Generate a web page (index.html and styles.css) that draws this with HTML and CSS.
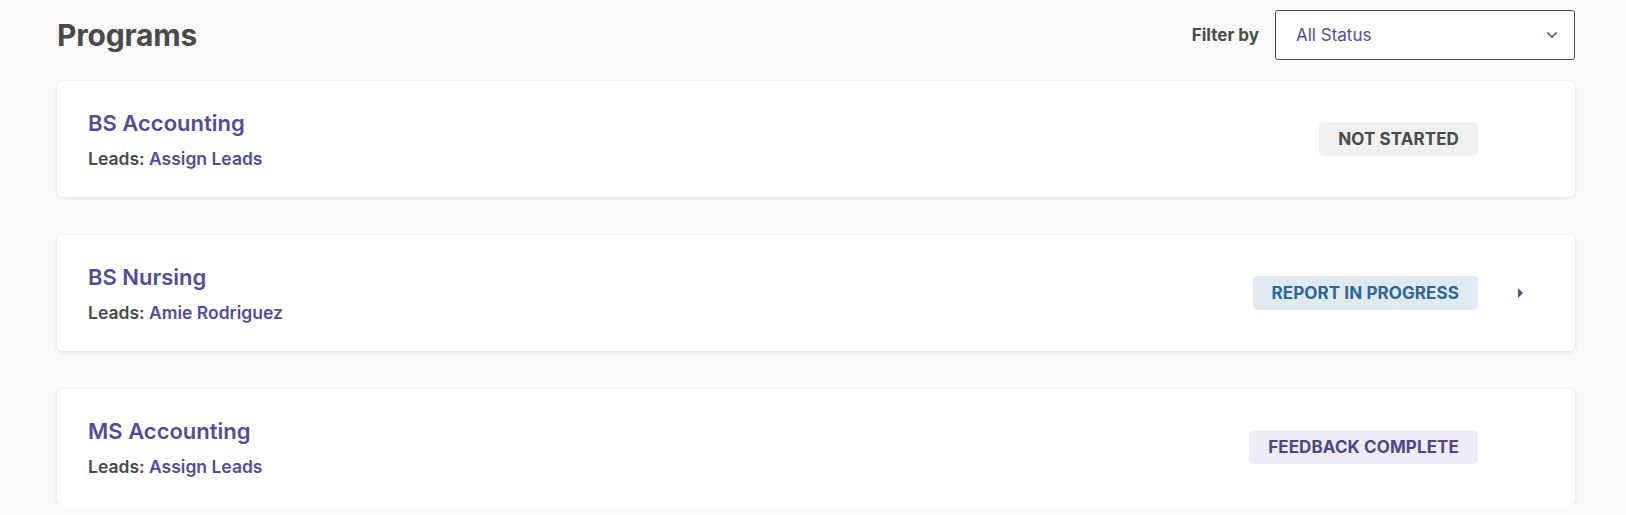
FILE: index.html
```html
<!DOCTYPE html>
<html lang="en">
<head>
    <meta charset="UTF-8">
    <title>Programs</title>
    <link rel="stylesheet" href="styles.css">
</head>
<body>

<main class="programs">

    <header class="programs-header">
        <h1 class="programs-title">Programs</h1>
        <label class="filter">
            <span class="filter-label">Filter by</span>
            <span class="filter-select">
                <span class="filter-value">All Status</span>
                <svg class="filter-chevron" width="12" height="8" viewBox="0 0 12 8">
                    <path d="M1.5 1.5 L6 6 L10.5 1.5" fill="none" stroke="#544c96" stroke-width="1.6"/>
                </svg>
            </span>
        </label>
    </header>

    <section class="program-list">

        <article class="program-card">
            <div class="program-info">
                <h2 class="program-name">BS Accounting</h2>
                <p class="program-leads">Leads: <a href="#">Assign Leads</a></p>
            </div>
            <div class="program-status">
                <span class="badge badge-not-started">Not Started</span>
                <span class="caret-slot"></span>
            </div>
        </article>

        <article class="program-card">
            <div class="program-info">
                <h2 class="program-name">BS Nursing</h2>
                <p class="program-leads">Leads: <a href="#">Amie Rodriguez</a></p>
            </div>
            <div class="program-status">
                <span class="badge badge-in-progress">Report in Progress</span>
                <span class="caret-slot"><span class="caret"></span></span>
            </div>
        </article>

        <article class="program-card">
            <div class="program-info">
                <h2 class="program-name">MS Accounting</h2>
                <p class="program-leads">Leads: <a href="#">Assign Leads</a></p>
            </div>
            <div class="program-status">
                <span class="badge badge-complete">Feedback Complete</span>
                <span class="caret-slot"></span>
            </div>
        </article>

    </section>

</main>

</body>
</html>
```

FILE: styles.css
```css
body {
    margin: 0;
    background: #f9f9f9;
    font-family: Inter, "Noto Sans", sans-serif;
    color: #4a4a4a;
}

.programs {
    padding: 10px 51px 0 57px;
}

/* header row */
.programs-header {
    display: flex;
    align-items: center;
    justify-content: space-between;
    margin-bottom: 21px;
}
.programs-title {
    margin: 0;
    font-size: 30px;
    font-weight: 700;
    letter-spacing: -.2px;
}

.filter {
    display: flex;
    align-items: center;
    gap: 16px;
}
.filter-label {
    font-size: 17px;
    font-weight: 700;
}
.filter-select {
    box-sizing: border-box;
    width: 300px;
    height: 50px;
    padding: 0 16px 0 20px;
    display: flex;
    align-items: center;
    justify-content: space-between;
    background: #fff;
    border: 1px solid #4a4a4a;
    border-radius: 3px;
}
.filter-value {
    font-size: 17px;
    color: #544c96;
}

/* cards */
.program-list {
    display: flex;
    flex-direction: column;
    gap: 38px;
}
.program-card {
    box-sizing: border-box;
    height: 116px;
    padding: 0 32px 0 31px;
    display: flex;
    align-items: center;
    justify-content: space-between;
    background: #fff;
    border-radius: 6px;
    box-shadow: 0 1px 4px rgba(0, 0, 0, .12);
}
.program-name {
    margin: 0 0 12px;
    font-size: 22px;
    font-weight: 600;
    color: #544c96;
}
.program-leads {
    margin: 0;
    font-size: 17.5px;
    font-weight: 600;
}
.program-leads a {
    color: #544c96;
    text-decoration: none;
}

.program-status {
    display: flex;
    align-items: center;
}
.badge {
    padding: 7px 19px;
    border-radius: 5px;
    font-size: 17px;
    font-weight: 700;
    text-transform: uppercase;
    letter-spacing: .1px;
}
.badge-not-started {
    background: #f0f0f0;
    color: #4a4a4a;
}
.badge-in-progress {
    background: #e1e9f0;
    color: #2e6794;
}
.badge-complete {
    background: #eeebf6;
    color: #4e4882;
}

.caret-slot {
    width: 65px;
    padding-left: 40px;
    box-sizing: border-box;
    display: flex;
}
.caret {
    width: 0;
    height: 0;
    border-top: 5px solid transparent;
    border-bottom: 5px solid transparent;
    border-left: 5px solid #544c96;
}
```
